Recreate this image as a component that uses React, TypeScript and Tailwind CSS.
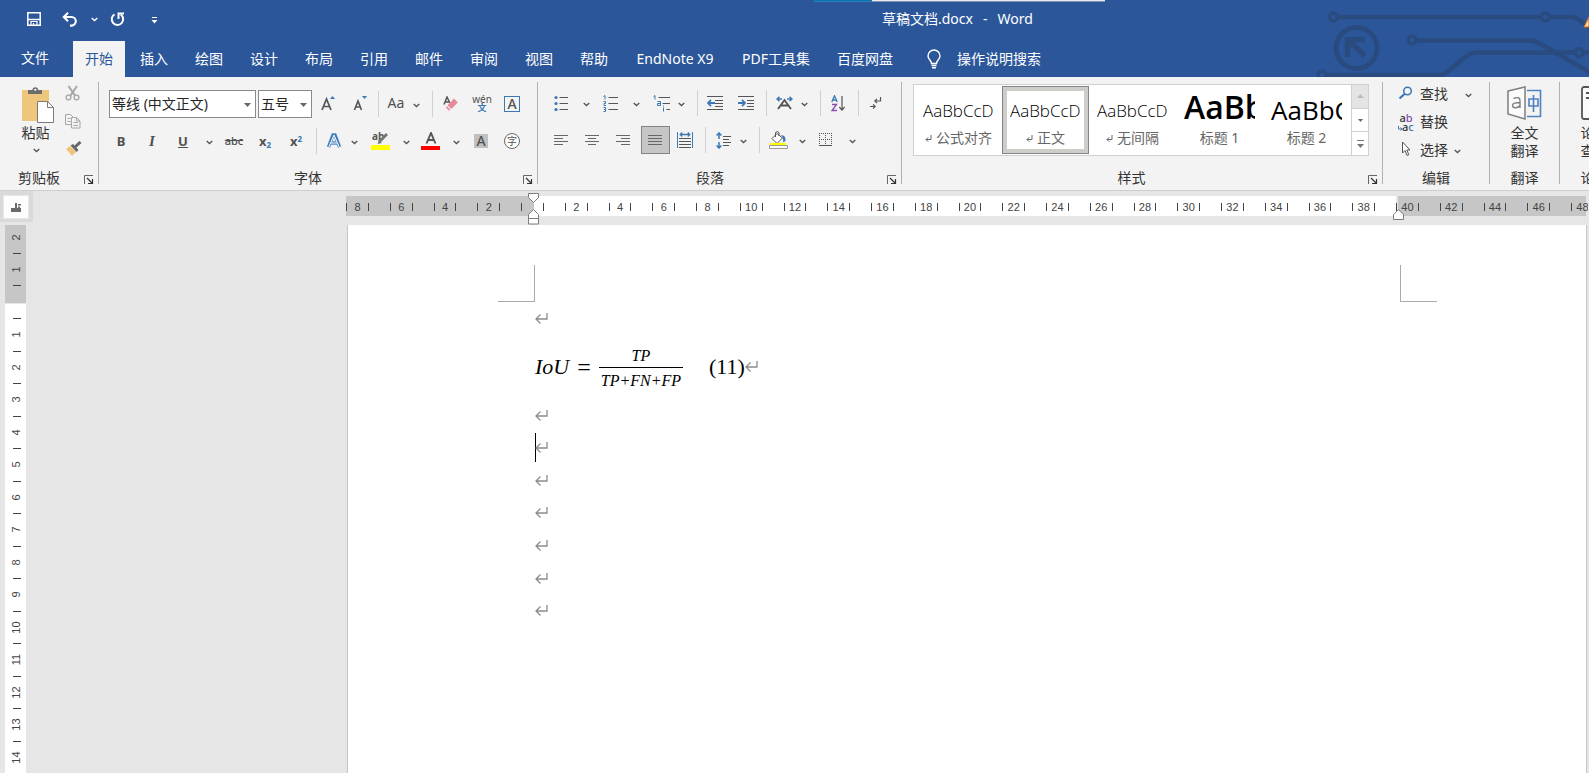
import React from "react";

type Kids = { children?: React.ReactNode };

function Svg({ w, h, children, className }: { w: number; h: number; className?: string } & Kids) {
  return (
    <svg width={w} height={h} viewBox={`0 0 ${w} ${h}`} fill="none" aria-hidden="true" className={`block shrink-0 ${className ?? ""}`}>
      {children}
    </svg>
  );
}

function Tool({ label, w = "w-8", children }: { label: string; w?: string } & Kids) {
  return (
    <button type="button" aria-label={label} className={`flex h-7 shrink-0 items-center justify-center ${w}`}>
      {children}
    </button>
  );
}

function Chevron({ color = "#555" }: { color?: string }) {
  return (
    <Svg w={7} h={5}>
      <path d="M.7 1l2.8 2.6L6.3 1" stroke={color} strokeWidth="1.3" />
    </Svg>
  );
}

function Drop({ label, w = "w-[10px]" }: { label: string; w?: string }) {
  return (
    <button type="button" aria-label={label} className={`flex h-7 shrink-0 items-center justify-center pt-0.5 ${w}`}>
      <Chevron />
    </button>
  );
}

function Sep({ m }: { m: string }) {
  return <div className={`h-[26px] w-px shrink-0 bg-[#d0d0d0] ${m}`} />;
}

function GroupLine() {
  return <div className="mt-[5px] mb-[6px] w-px shrink-0 bg-[#b1b1b1]" />;
}

function Group({ name, w, launcher, offset = "", children }: { name: string; w: string; launcher?: boolean; offset?: string } & Kids) {
  return (
    <section aria-label={name} className={`relative flex shrink-0 flex-col ${w}`}>
      <div className="flex-1">{children}</div>
      <div className={`pb-0.5 text-center text-sm leading-5 whitespace-nowrap text-[#333] ${offset}`}>{name}</div>
      {launcher && (
        <button type="button" aria-label={`${name}设置`} className="absolute right-1 bottom-[5px]">
          <Svg w={10} h={10}>
            <path d="M.5 9V.5H9" stroke="#666" />
            <path d="M3 3l5.500 5.500M8.500 4v4.500H4" stroke="#333" strokeWidth="1.200" />
          </Svg>
        </button>
      )}
    </section>
  );
}

const tabs = ["插入", "绘图", "设计", "布局", "引用", "邮件", "审阅", "视图", "帮助", "EndNote X9", "PDF工具集", "百度网盘"];

function Circuit() {
  return (
    <Svg w={273} h={77} className="absolute top-0 right-0">
      <g stroke="#2a4b80" strokeWidth="4.500">
        <circle cx="17.500" cy="17" r="4" strokeWidth="3.500" />
        <path d="M22 17h203" />
        <circle cx="229.500" cy="17" r="4" strokeWidth="3.500" />
        <path d="M234 17h20q5 0 8 2l12 9" />
        <circle cx="40.500" cy="48" r="20.500" strokeWidth="5" />
        <path d="M31.500 57V39.500H49M33 41l16 15" strokeWidth="5.500" />
        <circle cx="96" cy="40" r="4" strokeWidth="3.500" />
        <path d="M101 40.500h113q5 0 10 3l50 29" />
        <circle cx="6" cy="75" r="4" strokeWidth="3.500" />
        <path d="M10 75h114q3 0 6-2l18-15q6-5.500 12-5.500h98" />
        <circle cx="263" cy="52.500" r="4" strokeWidth="3.500" />
        <path d="M268 52.500h6" />
      </g>
      <path d="M273 17l-5 10h5z" fill="#ffd9a0" stroke="#d8700f" />
    </Svg>
  );
}

function Header() {
  return (
    <header className="relative overflow-hidden bg-[#2b579a] text-sm text-white">
      <Circuit />
      <div className="absolute top-0 left-[814px] flex h-0.5">
        <div className="w-[58px] border-b border-[#3d79b5] bg-[#0078b8]" />
        <div className="w-[233px] border-b border-[#8296b8] bg-[#e8e8e8]" />
      </div>
      <div className="relative flex h-[41px] items-center pb-[3px]">
        <div className="flex items-center pl-[27px]">
          <button type="button" aria-label="保存">
            <Svg w={14} h={14}>
              <path d="M.8.800h12.400v12.400H.8z" stroke="#fff" strokeWidth="1.500" />
              <path d="M1 7.500h12" stroke="#fff" strokeWidth="1.500" />
              <path d="M4 13v-3.500h6V13M6.500 11v2" stroke="#fff" strokeWidth="1.200" />
            </Svg>
          </button>
          <button type="button" aria-label="撤消" className="ml-[21px]">
            <Svg w={16} h={15}>
              <path d="M2 5h7.500a4.300 4.300 0 0 1 0 8.600H8M6 .8L1.800 5 6 9.200" stroke="#fff" strokeWidth="2.100" />
            </Svg>
          </button>
          <button type="button" aria-label="撤消选项" className="ml-[13px]">
            <Chevron color="#fff" />
          </button>
          <button type="button" aria-label="重复" className="ml-[12px]">
            <Svg w={15} h={15}>
              <path d="M4.500 2.300a5.700 5.700 0 1 0 6.200.2" stroke="#fff" strokeWidth="2" />
              <path d="M8.500 7V1.500H14" stroke="#fff" strokeWidth="1.900" />
            </Svg>
          </button>
          <button type="button" aria-label="自定义快速访问工具栏" className="mt-[3px] ml-[26px]">
            <Svg w={7} h={7}>
              <path d="M1 .5h5" stroke="#fff" />
              <path d="M.5 3h6l-3 3.500z" fill="#fff" />
            </Svg>
          </button>
        </div>
        <h1 className="ml-[724px] flex gap-[10px] whitespace-nowrap">
          <span>草稿文档.docx</span>
          <span>-</span>
          <span>Word</span>
        </h1>
      </div>
      <nav className="relative flex h-9 items-stretch gap-[3px] whitespace-nowrap">
        <button type="button" className="w-[70px] pb-0.5">文件</button>
        <button type="button" aria-current="page" className="bg-[#f3f3f3] px-3 text-[#2b579a]">开始</button>
        {tabs.map((t) => (
          <button type="button" key={t} className={t === "EndNote X9" ? "w-[104px]" : "px-3"}>{t}</button>
        ))}
        <button type="button" className="ml-[19px] flex items-center gap-4">
          <Svg w={14} h={20}>
            <path d="M4.500 14.500c0-3-3.500-4-3.500-7.500a6 6 0 0 1 12 0c0 3.500-3.500 4.500-3.500 7.500zM4.500 16.500h5M5 18.700h4" stroke="#fff" strokeWidth="1.400" />
          </Svg>
          操作说明搜索
        </button>
      </nav>
    </header>
  );
}

function Clipboard() {
  return (
    <Group name="剪贴板" w="w-[98px]" launcher offset="pr-5">
      <div className="flex pt-2 pl-[21px]">
        <button type="button" className="flex w-[33px] flex-col items-center pt-0.5 text-sm leading-5 whitespace-nowrap text-[#333]">
          <Svg w={32} h={36}>
            <path d="M0 3h27v31H0z" fill="#efc77c" />
            <path d="M6 7V3h4.500a2.800 2.800 0 0 1 5.600 0H20v4z" fill="#6d6d6d" />
            <circle cx="13.300" cy="2.800" r="1.100" fill="#fff" />
            <path d="M15.500 14.500h10l6 6v15h-16z" fill="#fff" stroke="#7a7a7a" />
            <path d="M25.500 14.500v6h6" stroke="#7a7a7a" />
          </Svg>
          <span className="pr-1">粘贴</span>
          <span className="flex h-[14px] items-center pr-0.5"><Chevron /></span>
        </button>
        <div className="ml-[11px] flex flex-col gap-3">
          <button type="button" aria-label="剪切">
            <Svg w={16} h={16}>
              <g stroke="#a6a6a6">
                <path d="M3.500 1l6.500 9.500M12 1L5.500 10.500" strokeWidth="2" />
                <circle cx="3.500" cy="12.500" r="2.400" strokeWidth="1.300" />
                <circle cx="11.500" cy="12.500" r="2.400" strokeWidth="1.300" />
              </g>
            </Svg>
          </button>
          <button type="button" aria-label="复制">
            <Svg w={16} h={16}>
              <g stroke="#a6a6a6">
                <path d="M.5 1.500h5l3 3v7h-8zM2.500 5.500h3M2.500 8.500h3" fill="#f3f3f3" />
                <path d="M6.500 4.500h5l3.500 3.500v7H6.500zM11.500 4.500V8H15M8.500 9.500h4.500M8.500 12.500h4.500" fill="#f3f3f3" />
              </g>
            </Svg>
          </button>
          <button type="button" aria-label="格式刷">
            <Svg w={17} h={16}>
              <path d="M1 8l4-3 6 6-4 4z" fill="#efc77c" />
              <path d="M5.500 4.500L8 3l5.500 6-2 2z" fill="#666" />
              <path d="M10 6l5.500-5" stroke="#666" strokeWidth="3" />
            </Svg>
          </button>
        </div>
      </div>
    </Group>
  );
}

function Combo({ label, value, w }: { label: string; value: string; w: string }) {
  return (
    <div className={`relative h-7 shrink-0 ${w}`}>
      <select aria-label={label} defaultValue={value} className="h-full w-full appearance-none border border-[#8a8a8a] bg-white pl-[2px] text-sm text-[#262626]">
        <option>{value}</option>
      </select>
      <Svg w={7} h={4} className="pointer-events-none absolute top-[13px] right-[5px]">
        <path d="M0 0h7L3.500 4z" fill="#666" />
      </Svg>
    </div>
  );
}

const G = "#555";
const B = "#3b78b5";

function FontGroup() {
  return (
    <Group name="字体" w="w-[438px]" launcher offset="pr-5">
      <div className="flex flex-col gap-[9px] pt-[13px] text-[#505050]">
        <div className="flex items-center pl-[10px]">
          <Combo label="字体" value="等线 (中文正文)" w="w-[147px]" />
          <div className="w-0.5" />
          <Combo label="字号" value="五号" w="w-[54px]" />
          <Tool label="增大字号">
            <Svg w={16} h={16}>
              <path d="M2 14L6.500 3 11 14M3.500 10.500h6" stroke={G} strokeWidth="1.700" />
              <path d="M10 3h5l-2.500-3z" fill={B} />
            </Svg>
          </Tool>
          <Tool label="减小字号">
            <Svg w={16} h={16}>
              <path d="M2.500 14L6 5l3.500 9M3.500 11h5" stroke={G} strokeWidth="1.600" />
              <path d="M10 0h5l-2.500 3z" fill={B} />
            </Svg>
          </Tool>
          <Sep m="mx-0.5" />
          <Tool label="更改大小写" w="w-[30px] pb-0.5"><span className="text-sm">Aa</span></Tool>
          <Drop label="大小写选项" />
          <Sep m="ml-[11px] mr-[3px]" />
          <Tool label="清除所有格式" w="w-[30px]">
            <Svg w={16} h={16}>
              <path d="M1 8.500L4 1l2.800 6M2 6h4" stroke={G} strokeWidth="1.500" />
              <path d="M4.500 9.300L11 2.500l3.800 4-6.500 6.600z" fill="#e8889a" />
              <path d="M4 10.300l3.300 3.500-1.300 1L2.800 11.500z" fill="#e8889a" />
            </Svg>
          </Tool>
          <Tool label="拼音指南">
            <span className="flex flex-col items-center">
              <span className="text-[10px] leading-[8px]">wén</span>
              <span className="text-[9px] leading-[10px] font-bold text-[#3b78b5]">文</span>
            </span>
          </Tool>
          <Tool label="字符边框" w="w-7">
            <span className="flex size-4 items-center justify-center border border-[#3b78b5] text-sm leading-4 font-medium">A</span>
          </Tool>
        </div>
        <div className="flex items-center pl-[6px]">
          <Tool label="加粗"><b className="text-[13px] leading-4">B</b></Tool>
          <Tool label="倾斜" w="w-[30px]"><i className="font-['Liberation_Serif',serif] text-[15px] leading-4 font-bold">I</i></Tool>
          <Tool label="下划线"><span className="border-b border-[#505050] text-[13px] leading-3 font-bold">U</span></Tool>
          <Drop label="下划线选项" w="w-5" />
          <Tool label="删除线" w="w-[30px]"><s className="text-[11px] leading-4 font-medium">abc</s></Tool>
          <Tool label="下标"><span className="text-[13px] leading-4 font-bold">x<sub className="text-[8px] text-[#3b78b5]">2</sub></span></Tool>
          <Tool label="上标" w="w-[30px]"><span className="text-[13px] leading-4 font-bold">x<sup className="text-[8px] text-[#3b78b5]">2</sup></span></Tool>
          <Sep m="ml-[5px] mr-0.5" />
          <Tool label="文本效果" w="w-[30px]">
            <Svg w={16} h={16}>
              <path d="M2.500 14L7 2h2l4.500 12M4.500 10h7" stroke="#b5d3ee" strokeWidth="4" />
              <path d="M2.500 14L7 2h2l4.500 12M4.500 10h7" stroke={B} strokeWidth="3" />
              <path d="M2.800 14L8 2l5.200 12M4.500 10h7" stroke="#fff" strokeWidth="1" />
            </Svg>
          </Tool>
          <Drop label="文本效果选项" />
          <Tool label="突出显示" w="w-[44px]">
            <Svg w={20} h={18}>
              <text x="1" y="8" fontSize="10" fontWeight="700" fill={G} fontFamily="Noto Sans, sans-serif">ab</text>
              <path d="M16 2L8 10" stroke="#777" strokeWidth="2.800" />
              <path d="M8 8l3 3-4.500 1z" fill="#777" />
              <path d="M0 13h19v5H0z" fill="#ff0" />
            </Svg>
          </Tool>
          <Drop label="突出显示颜色" w="w-[6px]" />
          <Tool label="字体颜色" w="w-[44px]">
            <Svg w={20} h={18}>
              <path d="M5.500 11.500L10 1l4.500 10.500M7 8h6" stroke={G} strokeWidth="1.900" />
              <path d="M0 14h19v4H0z" fill="#f00" />
            </Svg>
          </Tool>
          <Drop label="字体颜色选项" w="w-[6px]" />
          <Tool label="字符底纹" w="w-[44px]">
            <span className="w-[14px] bg-[#c0c0c0] text-center text-sm leading-[14px] font-medium">A</span>
          </Tool>
          <Tool label="带圈字符" w="w-[18px]">
            <span className="flex size-4 shrink-0 items-center justify-center rounded-full border border-[#666] bg-white text-[10px] leading-none">字</span>
          </Tool>
        </div>
      </div>
    </Group>
  );
}

function Lines({ d }: { d: string }) {
  return (
    <Svg w={15} h={13}>
      <path d={d} stroke="#666" />
    </Svg>
  );
}

function ParagraphGroup() {
  return (
    <Group name="段落" w="w-[363px]" launcher offset="pr-[19px]">
      <div className="flex flex-col gap-[9px] pt-[12px] pb-px">
        <div className="flex items-center pl-[7px]">
          <Tool label="项目符号">
            <Svg w={15} h={16}>
              <path d="M5.500 2.500H14M5.500 8.500H14M5.500 14.500H14" stroke={G} />
              <g fill={B}><circle cx="2" cy="2.500" r="1.600" /><circle cx="2" cy="8.500" r="1.600" /><circle cx="2" cy="14.500" r="1.600" /></g>
            </Svg>
          </Tool>
          <Drop label="项目符号选项" w="w-[18px]" />
          <Tool label="编号">
            <Svg w={16} h={17}>
              <path d="M5.500 2.500H15M5.500 8.500H15M5.500 14.500H15" stroke={G} />
              <path d="M.5 1.500L2 .5v4M.5 6.500h2v2h-1.500v2h2M.5 12.500h2v4h-2M1 14.500h1.500" stroke={B} />
            </Svg>
          </Tool>
          <Drop label="编号选项" w="w-[18px]" />
          <Tool label="多级列表">
            <Svg w={17} h={17}>
              <path d="M5.500 2.500H17M9.500 8.500H17M13.500 14.500H17" stroke={G} />
              <path d="M.5 1.500L2 .5v4M4.500 6.500h3v4h-3v-2h3M10.500 10.500v1M10.500 12.500v4" stroke={B} />
            </Svg>
          </Tool>
          <Drop label="多级列表选项" w="w-2" />
          <Sep m="ml-3 mr-0.5" />
          <Tool label="减少缩进量" w="w-[30px]">
            <Svg w={16} h={14}>
              <path d="M0 .5h16M8 4.500h8M8 7.500h8M8 10.500h8M0 13.500h16" stroke={G} />
              <path d="M8 7H1M4 3.800L1 7l3 3.200" stroke={B} strokeWidth="1.800" />
            </Svg>
          </Tool>
          <Tool label="增加缩进量">
            <Svg w={16} h={14}>
              <path d="M0 .5h16M9 4.500h7M9 7.500h7M9 10.500h7M0 13.500h16" stroke={G} />
              <path d="M0 7h7M4 3.800L7 7l-3 3.200" stroke={B} strokeWidth="1.800" />
            </Svg>
          </Tool>
          <Sep m="ml-1 mr-0.5" />
          <Tool label="中文版式" w="w-[30px]">
            <Svg w={17} h={14}>
              <path d="M2 13L8.500 4 15 13M5 9.500h7" stroke={G} strokeWidth="1.900" />
              <path d="M1 3h5M3.500.7L1 3l2.500 2.300M16 3h-5M13.500.7L16 3l-2.500 2.300" stroke={B} strokeWidth="1.400" />
            </Svg>
          </Tool>
          <Drop label="中文版式选项" />
          <Sep m="ml-[11px] mr-0.5" />
          <Tool label="排序" w="w-[30px]">
            <Svg w={14} h={17}>
              <path d="M.8 7L3.500.8 6.200 7M1.800 5h3.500" stroke={B} strokeWidth="1.300" />
              <path d="M1 9.500h4.500L1 15.500h5" stroke="#8c4db0" strokeWidth="1.400" />
              <path d="M11 1v14M8.300 12l2.700 3 2.700-3" stroke={G} strokeWidth="1.200" />
            </Svg>
          </Tool>
          <Sep m="ml-[5px] mr-0.5" />
          <Tool label="显示编辑标记" w="w-[30px]">
            <Svg w={12} h={14}>
              <path d="M10.500 1v4H5M7 2.800L4.800 5 7 7.200M0 10.500h5M3 8.300l2.200 2.200L3 12.700" stroke={G} strokeWidth="1.200" />
            </Svg>
          </Tool>
        </div>
        <div className="flex items-center pl-[7px]">
          <Tool label="左对齐"><Lines d="M0 1.500h14M0 4.500h9M0 7.500h14M0 10.500h9" /></Tool>
          <Tool label="居中" w="w-[30px]"><Lines d="M0 1.500h14M3 4.500h8M0 7.500h14M3 10.500h8" /></Tool>
          <Tool label="右对齐"><Lines d="M0 1.500h14M5 4.500h9M0 7.500h14M5 10.500h9" /></Tool>
          <Tool label="两端对齐" w="ml-0.5 w-[29px] border border-[#848484] bg-[#c6c6c6]"><Lines d="M0 1.500h14M0 4.500h14M0 7.500h14M0 10.500h14" /></Tool>
          <Tool label="分散对齐" w="w-[30px]">
            <Svg w={16} h={16}>
              <path d="M.5 0v16M15.500 0v16" stroke={B} />
              <path d="M3 2.500h10M5.200.5l-2 2 2 2M10.800.5l2 2-2 2" stroke={B} strokeWidth="1.300" />
              <path d="M2 6.500h12M2 9.500h12M2 12.500h12M2 15.500h12" stroke={G} />
            </Svg>
          </Tool>
          <Sep m="ml-[5px] mr-0.5" />
          <Tool label="行距" w="w-[30px]">
            <Svg w={15} h={17}>
              <path d="M3 1v6M.6 3.600L3 1l2.400 2.600M3 10v6M.6 13.400L3 16l2.400-2.600" stroke={B} strokeWidth="1.500" />
              <path d="M7 4.500h8M7 7.500h6M7 10.500h8M7 13.500h6" stroke={G} />
            </Svg>
          </Tool>
          <Drop label="行距选项" />
          <Sep m="ml-[11px] mr-0.5" />
          <Tool label="底纹">
            <Svg w={19} h={18}>
              <path d="M8 2.500L3 7.500l5 5 5.500-5.500z" fill="#fff" stroke={G} />
              <path d="M6.500 6V2a1.800 1.800 0 0 1 3.500 0v3" stroke={G} />
              <path d="M12 4q5 0 4.500 6l-2.500 1.500q1-4-2-7.500z" fill={B} />
              <path d="M1 12h16v2H1z" fill="#ff0" />
              <path d="M.5 14.500h18v3H.5z" fill="#fff" stroke="#9a9a9a" />
            </Svg>
          </Tool>
          <Drop label="底纹颜色" w="w-4" />
          <Tool label="边框">
            <Svg w={14} h={14}>
              <path d="M0 .5h13M0 6.500h13M.5 0v13M6.500 0v13M12.500 0v13" stroke={G} strokeDasharray="1 1" />
              <path d="M0 12.500h13" stroke={G} />
            </Svg>
          </Tool>
          <Drop label="边框选项" w="w-5" />
        </div>
      </div>
    </Group>
  );
}

const styles = [
  { name: "公式对齐", mark: true, sample: "AaBbCcD", cls: "text-[17px] font-light" },
  { name: "正文", mark: true, sample: "AaBbCcD", cls: "text-[17px] font-light", on: true },
  { name: "无间隔", mark: true, sample: "AaBbCcD", cls: "text-[17px] font-light" },
  { name: "标题 1", sample: "AaBb", cls: "pb-[7px] text-[32px] font-semibold" },
  { name: "标题 2", sample: "AaBbC", cls: "text-[26px]" },
];

function StylesGroup() {
  return (
    <Group name="样式" w="w-[480px]" launcher offset="pr-[21px]">
      <div className="mt-[7px] mr-[13px] ml-[11px] flex h-[72px] border border-[#d0d0d0] bg-white">
        <div className="flex flex-1 px-px py-px">
          {styles.map((s) => (
            <button
              type="button"
              key={s.name}
              aria-pressed={!!s.on}
              className={`flex w-[87px] flex-col items-center border pt-[7px] ${s.on ? "border-[#848484] shadow-[inset_0_0_0_4px_#cfcdca]" : "border-transparent"}`}
            >
              <span className={`flex h-8 w-[71px] items-center overflow-hidden font-['Open_Sans','Noto_Sans',sans-serif] leading-none text-black ${s.cls}`}>{s.sample}</span>
              <span className="flex h-6 items-center gap-1 text-sm whitespace-nowrap text-[#666]">
                {s.mark && (
                  <Svg w={7} h={7}>
                    <path d="M6 0v4.500H1M3.200 2.300L1 4.500l2.200 2.200" stroke="#666" />
                  </Svg>
                )}
                {s.name}
              </span>
            </button>
          ))}
        </div>
        <div className="flex w-[17px] flex-col border-l border-[#d0d0d0]">
          <button type="button" aria-label="上一行" className="flex flex-1 items-center justify-center bg-[#e4e4e4]">
            <Svg w={7} h={4}><path d="M0 4h7L3.500 0z" fill="#bdbdbd" /></Svg>
          </button>
          <button type="button" aria-label="下一行" className="flex flex-1 items-center justify-center border-t border-[#d0d0d0]">
            <Svg w={5} h={3}><path d="M0 0h5L2.500 3z" fill="#666" /></Svg>
          </button>
          <button type="button" aria-label="其他样式" className="flex flex-1 items-center justify-center border-t border-[#d0d0d0]">
            <Svg w={7} h={8}><path d="M0 0h7v1H0zM0 4h7L3.500 8z" fill="#777" /></Svg>
          </button>
        </div>
      </div>
    </Group>
  );
}

function EditGroup() {
  const row = "flex h-7 items-center text-sm text-[#333]";
  return (
    <Group name="编辑" w="w-[106px]">
      <div className="flex flex-col pt-[3px] pl-[15px]">
        <button type="button" className={row}>
          <Svg w={16} h={16} className="mr-[6px]">
            <circle cx="9.500" cy="5" r="3.800" stroke={B} strokeWidth="1.500" />
            <path d="M6.500 8L1.500 12.500" stroke={B} strokeWidth="2.200" />
          </Svg>
          查找
          <span className="ml-[17px] pt-0.5"><Chevron /></span>
        </button>
        <button type="button" className={row}>
          <span className="mr-[6px] flex w-4 flex-col text-[11px] leading-[9px] font-medium">
            <span>a<span className="text-[#8c4db0]">b</span></span>
            <span className="flex items-end">
              <Svg w={4} h={5}><path d="M.5 0v3H4M2.500 1.500L4 3 2.500 4.500" stroke={B} /></Svg>
              a<span className="text-[#3b78b5]">c</span>
            </span>
          </span>
          替换
        </button>
        <button type="button" className={row}>
          <Svg w={16} h={16} className="mr-[6px]">
            <path d="M4.500 0v11l2.500-2.500 2 5 1.800-.8-2-4.700h3.200z" fill="#fff" stroke={G} />
          </Svg>
          选择
          <span className="ml-[6px] pt-0.5"><Chevron /></span>
        </button>
      </div>
    </Group>
  );
}

function TranslateGroup() {
  return (
    <Group name="翻译" w="w-[69px]">
      <button type="button" className="flex w-full flex-col items-center pt-[9px] text-sm leading-[18px] text-[#333]">
        <Svg w={35} h={34}>
          <path d="M1 5l17-4v32L1 28z" fill="#fbfbfb" stroke="#7f7f7f" strokeWidth="1.500" />
          <path d="M6.500 12.500q6.500-2.500 6.500 2V22m0-5.500c-5 0-7.500.5-7.500 3s4.500 3.500 7.500 0" stroke="#7f7f7f" strokeWidth="1.400" />
          <path d="M20 4.500h13.500v26H20" stroke="#4f82c0" strokeWidth="1.600" />
          <path d="M22 13h9v7h-9zM26.500 9v17" stroke="#4f82c0" strokeWidth="1.600" />
        </Svg>
        <span className="pt-1">全文</span>
        <span>翻译</span>
      </button>
    </Group>
  );
}

function PaperGroup() {
  return (
    <Group name="论文" w="w-[69px]">
      <button type="button" className="flex w-full flex-col items-center pt-[9px] text-sm leading-[18px] text-[#333]">
        <Svg w={28} h={34}>
          <rect x="1" y="1" width="26" height="32" rx="2" fill="#fbfbfb" stroke="#555" strokeWidth="1.800" />
          <path d="M5 7h14M5 12h9" stroke="#555" strokeWidth="1.800" />
        </Svg>
        <span className="pt-1">论文</span>
        <span>查重</span>
      </button>
    </Group>
  );
}

function Ribbon() {
  return (
    <div className="flex h-[114px] overflow-hidden border-b border-[#cfcfcf] bg-[#f3f3f3]">
      <Clipboard />
      <GroupLine />
      <FontGroup />
      <GroupLine />
      <ParagraphGroup />
      <GroupLine />
      <StylesGroup />
      <GroupLine />
      <EditGroup />
      <GroupLine />
      <TranslateGroup />
      <GroupLine />
      <PaperGroup />
    </div>
  );
}

const columns = Array.from({ length: 57 }, (_, i) => i - 8);
const rows = Array.from({ length: 14 }, (_, i) => i + 1);

function HorizontalRuler() {
  return (
    <div className="relative w-[1242px]">
      <div className="h-5 overflow-hidden bg-[linear-gradient(90deg,#c6c6c6_188px,#fff_188px,#fff_1050px,#e6e6e6_1050px,#e6e6e6_1052px,#c6c6c6_1052px,#c6c6c6_1240px,#e6e6e6_1240px)]">
        <div className="flex h-full w-[1247px] items-center pt-0.5">
          {columns.map((n) => (
            <div key={n} className="flex h-2 flex-1 items-center justify-center border-l border-[#444] font-['Liberation_Sans',sans-serif] text-[11px] leading-none text-[#444]">
              {n !== 0 && n % 2 === 0 ? Math.abs(n) : ""}
            </div>
          ))}
        </div>
      </div>
      <Svg w={11} h={32} className="absolute -top-[3px] left-[182px]">
        <path d="M.5.500h10v4l-5 5-5-5z" fill="#fff" stroke="#7c7c7c" />
        <path d="M5.500 16.500l5 5v4H.5v-4zM.5 25.500h10v5.500H.5z" fill="#fff" stroke="#7c7c7c" />
      </Svg>
      <Svg w={11} h={11} className="absolute top-[13px] left-[1047px]">
        <path d="M5.500.7l5 5v4.800H.5V5.700z" fill="#fff" stroke="#7c7c7c" />
      </Svg>
    </div>
  );
}

function VerticalMark({ n }: { n: number }) {
  return (
    <div className="flex flex-1 flex-col items-center justify-center">
      <span className="-rotate-90 leading-none">{n}</span>
    </div>
  );
}

function VerticalRuler() {
  return (
    <div className="ml-[5px] w-[21px] shrink-0 overflow-hidden bg-[linear-gradient(180deg,#c6c6c6_78px,#e6e6e6_78px,#e6e6e6_79px,#fff_79px)] pl-0.5 font-['Liberation_Sans',sans-serif] text-[11px] text-[#444]">
      <div className="flex h-[61px] flex-col">
        <div className="flex h-7 items-center justify-center pb-1"><span className="-rotate-90 leading-none">2</span></div>
        <div className="mx-auto h-px w-2 bg-[#444]" />
        <div className="flex flex-1 items-center justify-center"><span className="-rotate-90 leading-none">1</span></div>
        <div className="mx-auto h-px w-2 bg-[#444]" />
      </div>
      <div className="mt-8 flex h-[455px] flex-col">
        {rows.map((n) => (
          <React.Fragment key={n}>
            <div className="mx-auto h-px w-2 shrink-0 bg-[#444]" />
            <VerticalMark n={n} />
          </React.Fragment>
        ))}
      </div>
    </div>
  );
}

function Return() {
  return (
    <Svg w={13} h={13}>
      <path d="M12 1v6H1M5.500 2.500L1 7l4.500 4.500" stroke="#8c8c8c" strokeWidth="1.300" />
    </Svg>
  );
}

function Page() {
  return (
    <main className="w-[1240px] shrink-0 border-x border-[#c6c6c6] bg-white">
      <div className="flex justify-between pt-10 pr-[149px] pl-[150px]">
        <div className="size-[37px] border-r border-b border-[#ababab]" />
        <div className="size-[37px] border-b border-l border-[#ababab]" />
      </div>
      <div className="px-[187px] font-['Liberation_Serif',serif] text-black">
        <div className="flex h-8 items-center"><Return /></div>
        <div className="flex h-[65px] items-center text-[22px] leading-none">
          <i>IoU</i>
          <span className="px-2 text-2xl leading-none">=</span>
          <span className="flex flex-col items-center pt-[3px] text-base leading-none italic">
            <span className="w-full border-b border-black pb-[3px] text-center">TP</span>
            <span className="px-0.5 pt-[5px]">TP+FN+FP</span>
          </span>
          <span className="ml-[26px]">(11)</span>
          <Return />
        </div>
        <div className="grid h-[228px] auto-rows-fr">
          {[0, 1, 2, 3, 4, 5, 6].map((n) => (
            <div key={n} className="flex items-center">
              {n === 1 && <span className="-mr-px h-[29px] w-px bg-black" />}
              <Return />
            </div>
          ))}
        </div>
      </div>
    </main>
  );
}

export default function App() {
  return (
    <div className="flex h-screen flex-col overflow-hidden bg-[#e6e6e6] font-['Noto_Sans','Noto_Sans_CJK_SC',sans-serif]">
      <Header />
      <Ribbon />
      <div className="flex justify-between">
        <div className="h-[31px] w-[33px] shrink-0 bg-[#dadada] pt-1 pl-[3px]">
          <button type="button" aria-label="制表位" className="flex h-6 w-[26px] items-center justify-center border border-[#e8e8e8] bg-[#fdfdfd]">
            <Svg w={10} h={9}>
              <path d="M0 5h10v4H0zM4 0h2v6H4zM7 1h3v1.500H7zM7 3.500h2V5H7z" fill="#6a6a6a" />
            </Svg>
          </button>
        </div>
        <div className="mt-[5px] mr-px"><HorizontalRuler /></div>
      </div>
      <div className="mt-[3px] flex min-h-0 flex-1">
        <VerticalRuler />
        <div className="flex-1" />
        <Page />
        <div className="w-0.5" />
      </div>
    </div>
  );
}
